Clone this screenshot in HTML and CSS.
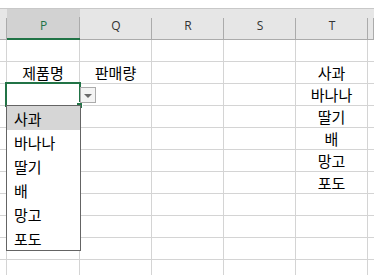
FILE: index.html
```html
<!DOCTYPE html>
<html lang="ko">
<head>
    <meta charset="UTF-8">
    <title>데이터 유효성 목록</title>
    <link rel="stylesheet" href="styles.css">
</head>
<body>
    <div class="sheet">
        <div class="topbar"></div>
        <div class="heads">
            <div class="head stub"></div>
            <div class="head picked">P</div>
            <div class="head">Q</div>
            <div class="head">R</div>
            <div class="head">S</div>
            <div class="head">T</div>
            <div class="head"></div>
        </div>
        <div class="grid">
            <!-- 1 -->
            <div class="cell"></div><div class="cell"></div><div class="cell"></div><div class="cell"></div><div class="cell"></div><div class="cell"></div><div class="cell"></div>
            <!-- 2 -->
            <div class="cell"></div><div class="cell">제품명</div><div class="cell">판매량</div><div class="cell"></div><div class="cell"></div><div class="cell">사과</div><div class="cell"></div>
            <!-- 3 -->
            <div class="cell"></div>
            <div class="cell active">
                <span class="handle"></span>
                <span class="drop-btn"><span class="arrow"></span></span>
                <ul class="drop-list">
                    <li class="on">사과</li>
                    <li>바나나</li>
                    <li>딸기</li>
                    <li>배</li>
                    <li>망고</li>
                    <li>포도</li>
                </ul>
            </div>
            <div class="cell"></div><div class="cell"></div><div class="cell"></div><div class="cell">바나나</div><div class="cell"></div>
            <!-- 4 -->
            <div class="cell"></div><div class="cell"></div><div class="cell"></div><div class="cell"></div><div class="cell"></div><div class="cell">딸기</div><div class="cell"></div>
            <!-- 5 -->
            <div class="cell"></div><div class="cell"></div><div class="cell"></div><div class="cell"></div><div class="cell"></div><div class="cell">배</div><div class="cell"></div>
            <!-- 6 -->
            <div class="cell"></div><div class="cell"></div><div class="cell"></div><div class="cell"></div><div class="cell"></div><div class="cell">망고</div><div class="cell"></div>
            <!-- 7 -->
            <div class="cell"></div><div class="cell"></div><div class="cell"></div><div class="cell"></div><div class="cell"></div><div class="cell">포도</div><div class="cell"></div>
            <!-- 8 -->
            <div class="cell"></div><div class="cell"></div><div class="cell"></div><div class="cell"></div><div class="cell"></div><div class="cell"></div><div class="cell"></div>
            <!-- 9 -->
            <div class="cell"></div><div class="cell"></div><div class="cell"></div><div class="cell"></div><div class="cell"></div><div class="cell"></div><div class="cell"></div>
            <!-- 10 -->
            <div class="cell"></div><div class="cell"></div><div class="cell"></div><div class="cell"></div><div class="cell"></div><div class="cell"></div><div class="cell"></div>
            <!-- 11 -->
            <div class="cell"></div><div class="cell"></div><div class="cell"></div><div class="cell"></div><div class="cell"></div><div class="cell"></div><div class="cell"></div>
            <!-- 12 -->
            <div class="cell"></div><div class="cell"></div><div class="cell"></div><div class="cell"></div><div class="cell"></div><div class="cell"></div><div class="cell"></div>
        </div>
    </div>
</body>
</html>
```

FILE: styles.css
```css
body {
    margin: 0;
    background: #fff;
    font-family: "Noto Sans CJK KR", "Noto Sans", sans-serif;
    overflow: hidden;
}

.sheet {
    width: 374px;
    height: 275px;
    overflow: hidden;
}

.topbar {
    height: 8px;
    border-bottom: 1px solid #c8c8c8;
}

.heads {
    display: grid;
    grid-template-columns: 7px 73px 72px 72px 72px 72px 1fr;
    height: 30px;
    background: #e6e6e6;
    border-bottom: 1px solid #ababab;
}

.head {
    display: flex;
    align-items: center;
    justify-content: center;
    font-family: "Open Sans", sans-serif;
    font-size: 12px;
    color: #333;
    padding-top: 3px;
    background: linear-gradient(#ababab, #ababab) right bottom / 1px 21px no-repeat;
}

.head.picked {
    background-color: #d2d2d2;
    color: #217346;
    border-bottom: 2px solid #217346;
    margin-bottom: -1px;
}

.grid {
    display: grid;
    grid-template-columns: 6px 72px 71px 71px 71px 71px 1fr;
    grid-auto-rows: 21px;
    gap: 1px;
    background: #d4d4d4;
}

.cell {
    position: relative;
    background: #fff;
    display: flex;
    align-items: center;
    justify-content: center;
    font-size: 15px;
    color: #000;
    line-height: 1;
}

.cell.active {
    outline: 2px solid #217346;
    outline-offset: 0;
    z-index: 2;
}

.handle {
    position: absolute;
    right: -4px;
    bottom: -4px;
    width: 5px;
    height: 5px;
    background: #217346;
    border: 1px solid #fff;
}

.drop-btn {
    position: absolute;
    left: 73px;
    top: 3px;
    width: 14px;
    height: 14px;
    border: 1px solid #ababab;
    background: #f4f4f4;
    display: flex;
    align-items: center;
    justify-content: center;
}

.arrow {
    width: 0;
    height: 0;
    border-left: 4px solid transparent;
    border-right: 4px solid transparent;
    border-top: 4px solid #6b6b6b;
    margin-top: 1px;
}

.drop-list {
    position: absolute;
    left: -1px;
    top: 21px;
    width: 73px;
    margin: 0;
    padding: 0;
    list-style: none;
    background: #fff;
    border: 1px solid #646464;
    z-index: 3;
}

.drop-list li {
    height: 24px;
    display: flex;
    align-items: center;
    padding-left: 7px;
    font-size: 15px;
    color: #000;
}

.drop-list li.on {
    background: #d6d6d6;
}
```
